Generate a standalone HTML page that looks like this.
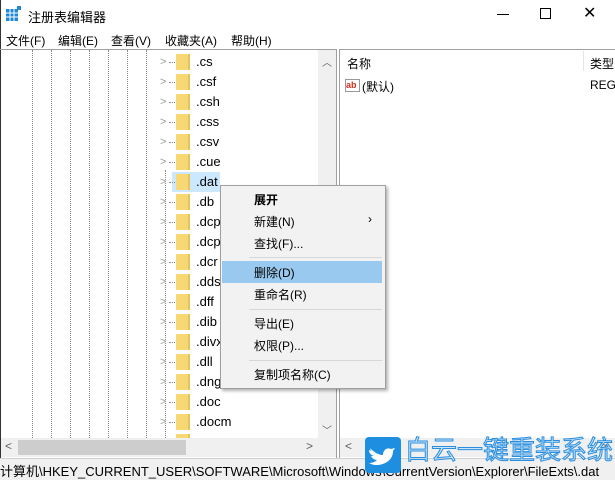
<!DOCTYPE html>
<html><head><meta charset="utf-8"><style>
*{margin:0;padding:0;box-sizing:border-box}
body{width:615px;height:480px;overflow:hidden;background:#fff;font-family:"Liberation Sans","Noto Sans CJK SC",sans-serif;font-size:12px;color:#000;position:relative}
.a{position:absolute;white-space:nowrap}
.dl{position:absolute;top:50px;height:388px;width:0;border-left:1px dotted #888}
.row{position:absolute;left:160px;height:20px;width:160px}
.row .ch{position:absolute;left:0;top:4px;color:#999;font-size:11px}
.row .dt{position:absolute;left:9px;top:10px;width:6px;border-top:1px dotted #888}
.row .f{position:absolute;left:16px;top:2px;width:14px;height:16px;background:#f8d775;border-right:2px solid #e8c25a}
.row .t{position:absolute;left:36px;top:2px;font-size:13px}
.mi{position:absolute;left:254px;font-size:12px}
</style></head><body>
<div class="a" style="left:0;top:0;width:1px;height:480px;background:#333"></div>
<svg class="a" style="left:6px;top:6px" width="16" height="16"><rect x="0" y="3" width="12" height="12" fill="#1e88d6"/><path d="M4 3v12M8 3v12M0 7h12M0 11h12" stroke="#fff" stroke-width="1"/><rect x="11" y="0" width="4" height="4" fill="#1e88d6"/></svg>
<div class="a" style="left:28px;top:7px;font-size:13px">注册表编辑器</div>
<div class="a" style="left:497px;top:14px;width:12px;border-top:1px solid #000"></div>
<div class="a" style="left:540px;top:8px;width:11px;height:11px;border:1px solid #000"></div>
<div class="a" style="left:583px;top:3px;font-size:16px">✕</div>
<div class="a" style="left:6px;top:32px">文件(F)</div>
<div class="a" style="left:58px;top:32px">编辑(E)</div>
<div class="a" style="left:111px;top:32px">查看(V)</div>
<div class="a" style="left:165px;top:32px">收藏夹(A)</div>
<div class="a" style="left:231px;top:32px">帮助(H)</div>
<div class="a" style="left:0;top:49px;width:337px;height:409px;border-top:1px solid #a0a0a0;border-right:1px solid #a0a0a0"></div>
<div class="dl" style="left:32px"></div><div class="dl" style="left:51px"></div><div class="dl" style="left:70px"></div><div class="dl" style="left:89px"></div><div class="dl" style="left:108px"></div><div class="dl" style="left:127px"></div><div class="dl" style="left:146px"></div><div class="dl" style="left:165px;top:170px;height:268px"></div>
<div class="a" style="left:172px;top:172px;width:48px;height:20px;background:#cce8ff"></div>
<div class="row" style="top:52px"><span class="ch">&gt;</span><span class="dt"></span><span class="f"></span><span class="t">.cs</span></div>
<div class="row" style="top:72px"><span class="ch">&gt;</span><span class="dt"></span><span class="f"></span><span class="t">.csf</span></div>
<div class="row" style="top:92px"><span class="ch">&gt;</span><span class="dt"></span><span class="f"></span><span class="t">.csh</span></div>
<div class="row" style="top:112px"><span class="ch">&gt;</span><span class="dt"></span><span class="f"></span><span class="t">.css</span></div>
<div class="row" style="top:132px"><span class="ch">&gt;</span><span class="dt"></span><span class="f"></span><span class="t">.csv</span></div>
<div class="row" style="top:152px"><span class="ch">&gt;</span><span class="dt"></span><span class="f"></span><span class="t">.cue</span></div>
<div class="row" style="top:172px"><span class="ch">&gt;</span><span class="dt"></span><span class="f"></span><span class="t">.dat</span></div>
<div class="row" style="top:192px"><span class="ch">&gt;</span><span class="dt"></span><span class="f"></span><span class="t">.db</span></div>
<div class="row" style="top:212px"><span class="ch">&gt;</span><span class="dt"></span><span class="f"></span><span class="t">.dcp</span></div>
<div class="row" style="top:232px"><span class="ch">&gt;</span><span class="dt"></span><span class="f"></span><span class="t">.dcp</span></div>
<div class="row" style="top:252px"><span class="ch">&gt;</span><span class="dt"></span><span class="f"></span><span class="t">.dcr</span></div>
<div class="row" style="top:272px"><span class="ch">&gt;</span><span class="dt"></span><span class="f"></span><span class="t">.dds</span></div>
<div class="row" style="top:292px"><span class="ch">&gt;</span><span class="dt"></span><span class="f"></span><span class="t">.dff</span></div>
<div class="row" style="top:312px"><span class="ch">&gt;</span><span class="dt"></span><span class="f"></span><span class="t">.dib</span></div>
<div class="row" style="top:332px"><span class="ch">&gt;</span><span class="dt"></span><span class="f"></span><span class="t">.divx</span></div>
<div class="row" style="top:352px"><span class="ch">&gt;</span><span class="dt"></span><span class="f"></span><span class="t">.dll</span></div>
<div class="row" style="top:372px"><span class="ch">&gt;</span><span class="dt"></span><span class="f"></span><span class="t">.dng</span></div>
<div class="row" style="top:392px"><span class="ch">&gt;</span><span class="dt"></span><span class="f"></span><span class="t">.doc</span></div>
<div class="row" style="top:412px"><span class="ch">&gt;</span><span class="dt"></span><span class="f"></span><span class="t">.docm</span></div>
<div class="row" style="top:432px"><span class="f"></span></div>
<div class="a" style="left:318px;top:50px;width:18px;height:388px;background:#f0f0f0"></div>
<div class="a" style="left:322px;top:54px;color:#606060;font-size:10px">︿</div>
<div class="a" style="left:322px;top:422px;color:#606060;font-size:10px">﹀</div>
<div class="a" style="left:1px;top:438px;width:335px;height:19px;background:#f0f0f0"></div>
<div class="a" style="left:18px;top:440px;width:168px;height:15px;background:#cdcdcd"></div>
<div class="a" style="left:5px;top:439px;color:#606060">&lt;</div>
<div class="a" style="left:306px;top:439px;color:#606060">&gt;</div>
<div class="a" style="left:339px;top:49px;width:276px;height:409px;border-top:1px solid #a0a0a0;border-left:1px solid #a0a0a0"></div>
<div class="a" style="left:583px;top:51px;width:1px;height:20px;background:#e5e5e5"></div>
<div class="a" style="left:347px;top:55px">名称</div>
<div class="a" style="left:590px;top:55px">类型</div>
<div class="a" style="left:345px;top:79px;width:15px;height:13px;border:1px solid #999;background:#fff;color:#d0301a;font-size:9px;font-weight:bold;line-height:11px">ab</div>
<div class="a" style="left:362px;top:78px">(默认)</div>
<div class="a" style="left:590px;top:78px">REG</div>
<div class="a" style="left:340px;top:438px;width:275px;height:19px;background:#f0f0f0"></div>
<div class="a" style="left:345px;top:439px;color:#606060">&lt;</div>
<div class="a" style="left:600px;top:439px;color:#606060">&gt;</div>
<div class="a" style="left:0;top:458px;width:615px;height:22px;background:#f0f0f0;border-top:1px solid #d0d0d0"></div>
<div class="a" style="left:0;top:461px;font-size:13px;width:615px;overflow:hidden">计算机\HKEY_CURRENT_USER\SOFTWARE\Microsoft\Windows\CurrentVersion\Explorer\FileExts\.dat</div>
<div class="a" style="left:365px;top:437px;width:36px;height:36px;background:#1e8fe0;border-radius:4px"></div>
<svg class="a" style="left:369px;top:443px" width="28" height="24" viewBox="0 0 28 24"><path d="M2 6c4 4 8 6 12 6 0-5 4-8 8-6l4-1-2 3c0 9-8 14-17 14-3 0-5-1-7-2 3 0 6-1 8-3-3 0-5-2-6-4h3c-3-1-5-3-5-6l3 1c-2-1-2-4-1-2z" fill="#fff"/></svg>
<div class="a" style="left:405px;top:434px;font-size:26px;line-height:32px;color:rgba(180,220,250,0.6);-webkit-text-stroke:1px #2a8fe0;width:210px;overflow:hidden">白云一键重装系统</div>
<div class="a" style="left:220px;top:185px;width:166px;height:204px;background:#f2f2f2;border:1px solid #a0a0a0;box-shadow:2px 2px 3px rgba(0,0,0,.3)"></div>
<div class="a" style="left:222px;top:261px;width:160px;height:22px;background:#99c9ef"></div>
<div class="a" style="left:249px;top:257px;width:133px;border-top:1px solid #d7d7d7"></div>
<div class="a" style="left:249px;top:309px;width:133px;border-top:1px solid #d7d7d7"></div>
<div class="a" style="left:249px;top:360px;width:133px;border-top:1px solid #d7d7d7"></div>
<div class="mi" style="top:191px;font-weight:bold">展开</div>
<div class="mi" style="top:213px">新建(N)</div>
<div class="a" style="left:368px;top:212px">›</div>
<div class="mi" style="top:235px">查找(F)...</div>
<div class="mi" style="top:264px">删除(D)</div>
<div class="mi" style="top:286px">重命名(R)</div>
<div class="mi" style="top:315px">导出(E)</div>
<div class="mi" style="top:337px">权限(P)...</div>
<div class="mi" style="top:366px">复制项名称(C)</div>
</body></html>
